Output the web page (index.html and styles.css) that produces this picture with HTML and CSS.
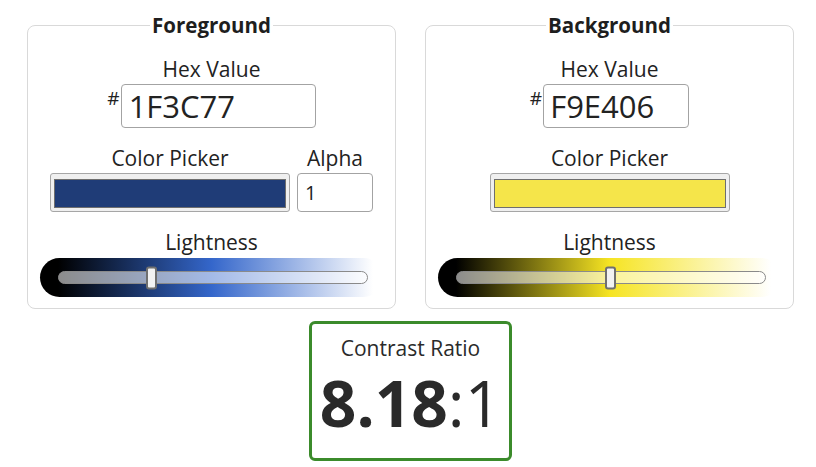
FILE: index.html
```html
<!DOCTYPE html>
<html lang="en">
<head>
<meta charset="utf-8">
<title>Contrast Checker</title>
<link rel="stylesheet" href="styles.css">
</head>
<body>
<main class="page">
  <div class="pickers">
    <fieldset class="panel">
      <legend class="legend">Foreground</legend>
      <div class="field">
        <span class="label">Hex Value</span>
        <div class="hex-row">
          <span class="hash">#</span>
          <input class="hex hex-fg" type="text" value="1F3C77">
        </div>
      </div>
      <div class="color-row">
        <div class="col">
          <span class="label">Color Picker</span>
          <div class="swatch"><div class="swatch-fill fill-fg"></div></div>
        </div>
        <div class="col">
          <span class="label">Alpha</span>
          <input class="alpha" type="text" value="1">
        </div>
      </div>
      <div class="field field-light">
        <span class="label">Lightness</span>
        <div class="lightness grad-fg">
          <div class="track"><div class="thumb" style="left: 30%"></div></div>
        </div>
      </div>
    </fieldset>

    <fieldset class="panel">
      <legend class="legend">Background</legend>
      <div class="field">
        <span class="label">Hex Value</span>
        <div class="hex-row">
          <span class="hash">#</span>
          <input class="hex hex-bg" type="text" value="F9E406">
        </div>
      </div>
      <div class="color-row">
        <div class="col">
          <span class="label">Color Picker</span>
          <div class="swatch"><div class="swatch-fill fill-bg"></div></div>
        </div>
      </div>
      <div class="field field-light">
        <span class="label">Lightness</span>
        <div class="lightness grad-bg">
          <div class="track"><div class="thumb" style="left: 49.8%"></div></div>
        </div>
      </div>
    </fieldset>
  </div>

  <section class="result">
    <div class="result-title">Contrast Ratio</div>
    <div class="result-value"><strong class="ratio">8.18</strong>:1</div>
  </section>
</main>
</body>
</html>
```

FILE: styles.css
```css
* {
  box-sizing: border-box;
}

html, body {
  margin: 0;
  background: #ffffff;
}

body {
  font-family: "Open Sans", "DejaVu Sans", sans-serif;
  color: #222222;
}

.page {
  width: 794px;
  padding: 12px 0 0 27px;
  display: flex;
  flex-direction: column;
  align-items: center;
}

.pickers {
  display: flex;
  gap: 29px;
  width: 767px;
}

.panel {
  width: 369px;
  margin: 0;
  min-width: 0;
  padding: 18px 12px 11px;
  border: 1px solid #d9d9d9;
  border-radius: 8px;
}

.legend {
  margin: 0 auto;
  padding: 0 2px;
  font-size: 20.5px;
  font-weight: 700;
  line-height: 26px;
  color: #1e1e1e;
}

.field {
  display: flex;
  flex-direction: column;
  align-items: center;
}

.label {
  display: block;
  font-size: 21px;
  line-height: 27px;
  color: #222222;
  text-align: center;
}

.hex-row {
  display: flex;
  justify-content: center;
  align-items: flex-start;
  margin-top: 1px;
}

.hash {
  font-size: 19px;
  line-height: 22px;
  margin-top: 3px;
  margin-right: 1px;
}

.hex {
  height: 44px;
  padding: 0 7px;
  border: 1px solid #a3a3a3;
  border-radius: 4px;
  font-family: "Open Sans", "DejaVu Sans", sans-serif;
  font-size: 31px;
  color: #222222;
  background: #ffffff;
  outline: none;
}

.hex-fg {
  width: 195px;
}

.hex-bg {
  width: 146px;
  padding-left: 6px;
}

.color-row {
  display: flex;
  justify-content: center;
  gap: 7px;
  margin-top: 17px;
}

.col {
  display: flex;
  flex-direction: column;
  align-items: center;
}

.col .label {
  margin-bottom: 1px;
}

.swatch {
  width: 240px;
  height: 39px;
  padding: 5px 3px 3px 3px;
  border: 1px solid #a6a6a6;
  border-radius: 3px;
  background: #efefef;
}

.swatch-fill {
  width: 100%;
  height: 100%;
  border: 1px solid #6e6e6e;
}

.fill-fg {
  background: #1f3c77;
}

.fill-bg {
  background: #f5e54a;
}

.alpha {
  width: 76px;
  height: 39px;
  padding: 0 7px;
  border: 1px solid #a3a3a3;
  border-radius: 4px;
  font-family: "Open Sans", "DejaVu Sans", sans-serif;
  font-size: 20px;
  color: #222222;
  background: #ffffff;
  outline: none;
}

.field-light {
  margin-top: 17px;
  align-items: stretch;
}

.field-light .label {
  margin-bottom: 2px;
}

.lightness {
  height: 39px;
  border-radius: 20px;
  padding: 0 15px 0 18px;
  display: flex;
  align-items: center;
}

.grad-fg {
  background: linear-gradient(to right, #000000 18px, hsl(220, 59%, 50%) 50%, #ffffff calc(100% - 10px));
}

.grad-bg {
  background: linear-gradient(to right, #000000 18px, hsl(55, 92%, 55%) 50%, #ffffff calc(100% - 10px));
}

.track {
  position: relative;
  flex: 1;
  height: 13px;
  border: 1px solid #8a8a8a;
  border-radius: 7px;
  background: rgba(255, 255, 255, 0.55);
}

.thumb {
  position: absolute;
  top: 50%;
  width: 11px;
  height: 23px;
  margin-left: -5px;
  transform: translateY(-50%);
  border: 2px solid #6f6f6f;
  border-radius: 3px;
  background: #f2f2f2;
}

.result {
  width: 203px;
  height: 140px;
  margin-top: 12px;
  padding-top: 11px;
  border: 3px solid #3b8b2b;
  border-radius: 6px;
  text-align: center;
}

.result-title {
  font-size: 21px;
  line-height: 27px;
  color: #2a2a2a;
}

.result-value {
  margin-top: 9px;
  font-size: 64px;
  line-height: 64px;
  color: #2a2a2a;
  white-space: nowrap;
}

.ratio {
  font-weight: 700;
}
```
